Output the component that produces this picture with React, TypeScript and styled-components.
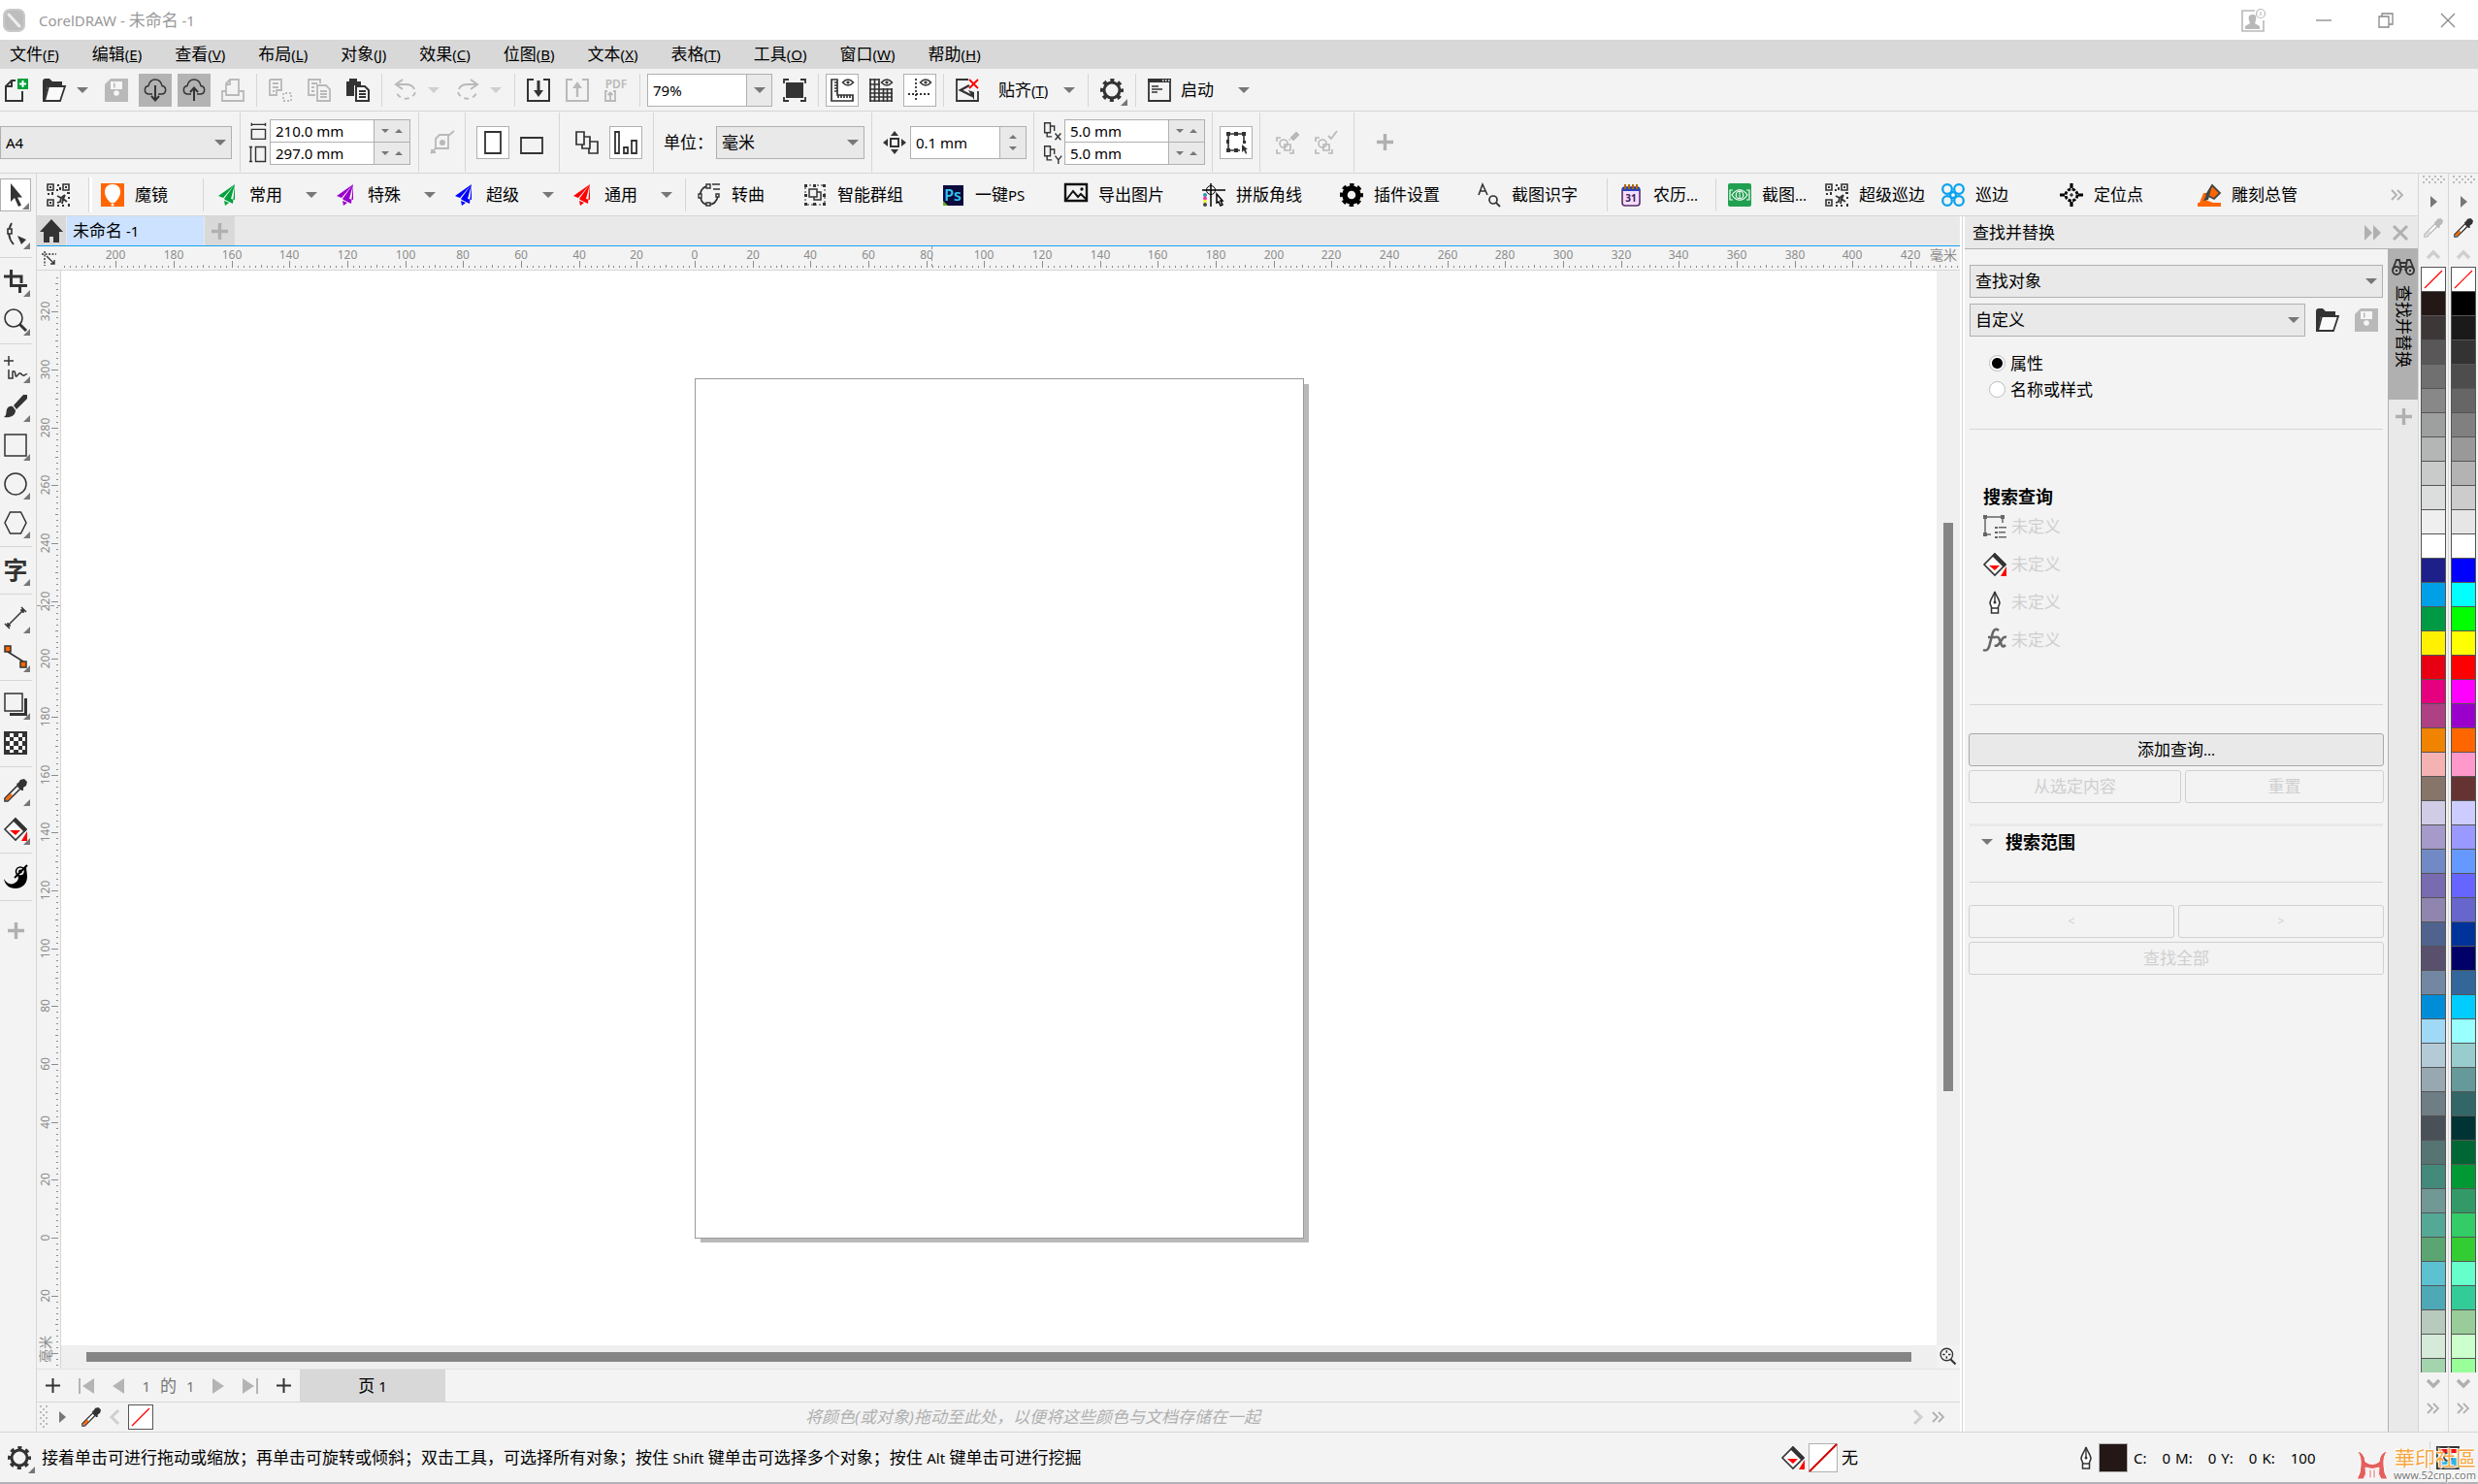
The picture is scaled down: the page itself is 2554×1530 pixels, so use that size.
import React from "react";
import styled, { createGlobalStyle, css } from "styled-components";

const INK = "#333333";
const MUTE = "#b9b9b9";
const LINE = "#d6d6d6";
const EDGE = "#b0b0b0";
const PANEL = "#f3f3f3";
const FIELD = "#e9e9e9";
const ORANGE = "#ff6600";
const RED = "#ff0000";

const GlobalStyle = createGlobalStyle`
  *, *::before, *::after { box-sizing: border-box; }
  body { margin: 0; background: ${PANEL}; overflow: hidden; }
  body, button, input, select {
    font-family: "Noto Sans", "Noto Sans CJK SC", sans-serif;
    font-size: 17px;
    line-height: 24px;
    color: #000;
  }
  button { margin: 0; padding: 0; border: 0; background: none; white-space: nowrap; }
  svg { display: block; flex: none; overflow: visible; }
`;

/* ---------- shared parts ---------- */

const Shell = styled.div`
  display: flex;
  flex-direction: column;
  height: 100vh;
`;

const Latin = styled.span`
  font-size: 15px;
`;

const TitleBar = styled.header`
  display: flex;
  align-items: center;
  flex: none;
  height: 41px;
  padding: 0 19px 0 3px;
  gap: 13px;
  background: #fff;
  color: #999;
`;

const WindowControls = styled.div`
  display: flex;
  align-items: center;
  margin-left: auto;
  gap: 40px;
`;

const AccountButton = styled.button`
  padding-right: 9px;
`;

const MenuBar = styled.nav`
  display: flex;
  align-items: center;
  flex: none;
  height: 30px;
  padding-left: 10px;
  gap: 34px;
  background: #d8d8d8;
`;

const Bar = styled.div<{ $h: number }>`
  display: flex;
  align-items: center;
  flex: none;
  height: ${(p) => p.$h}px;
  border-bottom: 1px solid ${LINE};
  background: ${PANEL};
`;

const CommandBar = styled(Bar)`
  gap: 6px;
  padding-left: 1px;
`;

const Divider = styled.span<{ $h?: number }>`
  flex: none;
  width: 1px;
  height: ${(p) => p.$h ?? 34}px;
  margin: 0 1px;
  background: ${LINE};
`;

const ToolButton = styled.button<{ $w?: number; $tone?: "on" | "dark" }>`
  position: relative;
  display: flex;
  flex: none;
  align-items: center;
  justify-content: center;
  width: ${(p) => p.$w ?? 34}px;
  height: 34px;
  ${(p) => p.$tone === "on" && css`background: #fff; border: 1px solid ${EDGE};`}
  ${(p) => p.$tone === "dark" && css`background: #b3b3b3;`}
`;

const FlyoutCorner = styled.span`
  position: absolute;
  right: 1px;
  bottom: 1px;
  border-left: 7px solid transparent;
  border-bottom: 7px solid #777;
`;

const Split = styled.div`
  display: flex;
  align-items: center;
`;

const CaretButton = styled.button`
  display: flex;
  align-items: center;
  justify-content: center;
  width: 24px;
  height: 34px;
`;

const SnapButton = styled.button`
  display: flex;
  align-items: center;
  height: 34px;
  width: 94px;
  padding: 0 6px 0 9px;
  justify-content: space-between;
`;

const LaunchButton = styled(SnapButton)`
  width: 116px;
  padding: 0 6px 0 5px;
  justify-content: flex-start;
  gap: 10px;
  > :last-child { margin-left: auto; }
`;

const ComboBox = styled.div<{ $w: number }>`
  display: flex;
  flex: none;
  width: ${(p) => p.$w}px;
  height: 34px;
  border: 1px solid ${EDGE};
  background: #fff;
`;

const TextInput = styled.input`
  flex: 1;
  min-width: 0;
  border: 0;
  outline: 0;
  padding: 0 5px;
  background: #fff;
  font-size: 15px;
`;

const ComboCaret = styled.button`
  display: flex;
  align-items: center;
  justify-content: center;
  width: 26px;
  border-left: 1px solid ${EDGE};
  background: ${FIELD};
`;

const SelectBox = styled.div<{ $w?: number }>`
  display: grid;
  align-items: center;
  height: 34px;
  flex: ${(p) => (p.$w ? "none" : "1")};
  width: ${(p) => (p.$w ? p.$w + "px" : "auto")};
  > * { grid-area: 1 / 1; }
  > svg { justify-self: end; margin-right: 6px; pointer-events: none; }
`;

const NativeSelect = styled.select<{ $latin?: boolean }>`
  appearance: none;
  width: 100%;
  height: 34px;
  border: 1px solid ${EDGE};
  border-radius: 0;
  padding: 0 5px;
  background: ${FIELD};
  ${(p) => p.$latin && css`font-size: 15px;`}
`;

const PropertyGroup = styled.div<{ $w: number; $pad?: number; $gap?: number }>`
  display: flex;
  flex: none;
  align-items: center;
  width: ${(p) => p.$w}px;
  height: 61px;
  padding-left: ${(p) => p.$pad ?? 7}px;
  gap: ${(p) => p.$gap ?? 6}px;
  border-right: 1px solid ${LINE};
`;

const SizeGrid = styled.div`
  display: grid;
  grid-template-columns: 18px 145px;
  grid-template-rows: 24px 23px;
  column-gap: 4px;
  align-items: center;
`;

const SpinRow = styled.div`
  display: flex;
  height: 100%;
  border: 1px solid ${EDGE};
  background: #fff;
  &:last-child { border-top: 0; }
`;

const SpinPair = styled.div`
  display: flex;
  align-items: center;
  justify-content: space-evenly;
  width: 37px;
  border-left: 1px solid ${EDGE};
  background: ${FIELD};
`;

const SpinStack = styled(SpinPair)`
  flex-direction: column;
  width: 27px;
`;

const SpinButton = styled.button`
  display: flex;
`;

const AddButton = styled.button<{ $w: number; $h: number }>`
  display: flex;
  align-items: center;
  justify-content: center;
  width: ${(p) => p.$w}px;
  height: ${(p) => p.$h}px;
`;

/* ---------- main area ---------- */

const Main = styled.main`
  display: flex;
  flex: 1;
  min-height: 0;
  border-bottom: 1px solid ${LINE};
`;

const Toolbox = styled.aside`
  display: flex;
  flex-direction: column;
  flex: none;
  width: 38px;
  padding-top: 5px;
  gap: 6px;
  border-right: 1px solid ${LINE};
`;

const ToolRule = styled.span`
  flex: none;
  width: 33px;
  height: 1px;
  margin: 1px 0;
  background: ${LINE};
`;

const Center = styled.div`
  display: flex;
  flex-direction: column;
  flex: 1;
  min-width: 0;
`;

const PluginBar = styled(Bar)`
  padding: 0 14px 0 5px;
`;

const PluginButton = styled.button<{ $w: number }>`
  display: flex;
  flex: none;
  align-items: center;
  width: ${(p) => p.$w}px;
  height: 34px;
  padding-left: 5px;
  gap: 11px;
`;

const PluginCaret = styled.span`
  margin-left: 13px;
`;

const PluginDivider = styled(Divider)`
  margin: 0 7px 0 6px;
`;

const PluginGrip = styled.span`
  width: 4px;
  height: 36px;
  margin: 0 4px 0 7px;
  background: #fff;
  border-left: 1px solid ${LINE};
`;

const Overflow = styled.button`
  margin-left: auto;
`;

const Work = styled.div`
  display: flex;
  flex: 1;
  min-height: 0;
`;

const DocumentArea = styled.section`
  display: flex;
  flex-direction: column;
  flex: 1;
  min-width: 0;
`;

const DocTabs = styled.div`
  display: flex;
  flex: none;
  height: 31px;
  gap: 1px;
  border-bottom: 1px solid #16a4ee;
  background: ${FIELD};
`;

const TabCell = styled.button<{ $w: number; $active?: boolean }>`
  display: flex;
  align-items: center;
  justify-content: ${(p) => (p.$active ? "flex-start" : "center")};
  width: ${(p) => p.$w}px;
  padding-left: ${(p) => (p.$active ? 6 : 0)}px;
  background: ${(p) => (p.$active ? "#cde2ff" : "#d9d9d9")};
`;

const HRulerRow = styled.div`
  display: flex;
  flex: none;
  height: 25px;
  border-bottom: 1px solid ${LINE};
`;

const RulerCorner = styled.div`
  flex: none;
  width: 25px;
`;

const RulerSvg = styled.svg`
  flex: 1;
  min-width: 0;
  min-height: 0;
  width: 100%;
  height: 100%;
  font-size: 12px;
`;

const CanvasRow = styled.div`
  display: flex;
  flex: 1;
  min-height: 0;
`;

const VRuler = styled.div`
  display: flex;
  flex: none;
  width: 25px;
  border-right: 1px solid ${LINE};
`;

const CanvasColumn = styled.div`
  display: grid;
  flex: 1;
  min-width: 0;
  grid-template-columns: 1fr 24px;
  grid-template-rows: 1fr 24px;
`;

const Canvas = styled.div`
  position: relative;
  overflow: hidden;
  background: #fff;
`;

const Page = styled.div`
  position: absolute;
  left: 653px;
  top: 111px;
  width: 628px;
  height: 887px;
  border: 1px solid #999;
  background: #fff;
  box-shadow: 5px 4px 0 #b9b9b9;
  clip-path: polygon(0 0, 100% 0, 100% 6px, 640px 6px, 640px 900px, 6px 900px, 6px 100%, 0 100%);
`;

const VScroll = styled.div`
  display: flex;
  flex-direction: column;
  align-items: center;
  background: #efefef;
`;

const HScroll = styled.div`
  display: flex;
  align-items: center;
  padding: 0 26px;
  background: #efefef;
`;

const Grow = styled.span<{ $n: number }>`
  flex: ${(p) => p.$n};
`;

const VThumb = styled.span`
  flex: 586;
  width: 10px;
  background: #858585;
`;

const HThumb = styled.span`
  flex: 1;
  height: 10px;
  background: #858585;
`;

const ZoomCorner = styled.button`
  display: flex;
  align-items: center;
  justify-content: center;
`;

const PageBar = styled.div`
  display: flex;
  flex: none;
  align-items: center;
  height: 35px;
  border-top: 1px solid #e2e2e2;
  border-bottom: 1px solid ${LINE};
`;

const PageNav = styled.div`
  display: flex;
  align-items: center;
  justify-content: space-between;
  width: 271px;
  padding: 0 9px;
  color: #777;
`;

const PageCount = styled.span`
  width: 54px;
  display: flex;
  justify-content: space-between;
`;

const PageTab = styled.button`
  width: 150px;
  height: 33px;
  background: #d8d8d8;
`;

const ColorBar = styled.div`
  display: flex;
  flex: none;
  align-items: center;
  height: 30px;
  padding: 0 15px 0 3px;
  gap: 8px;
`;

const NoneSwatch = styled.button`
  display: flex;
  align-items: center;
  justify-content: center;
  width: 26px;
  height: 26px;
  border: 1px solid #555;
  background: #fff;
`;

const Hint = styled.em`
  flex: 1;
  text-align: center;
  color: #b0b0b0;
`;

const Splitter = styled.div`
  flex: none;
  width: 5px;
  border: solid #fff;
  border-width: 0 2px;
  background: ${LINE};
`;

/* ---------- docker ---------- */

const Docker = styled.section`
  display: flex;
  flex-direction: column;
  flex: none;
  width: 467px;
`;

const DockerHeader = styled.div`
  display: flex;
  align-items: center;
  height: 34px;
  padding: 0 10px 0 8px;
  gap: 12px;
  border-bottom: 1px solid ${EDGE};
  background: ${FIELD};
  > :first-child { flex: 1; }
`;

const DockerMain = styled.div`
  display: flex;
  flex: 1;
  min-height: 0;
`;

const DockerBody = styled.div`
  flex: 1;
  padding: 16px 4px 0;
`;

const DockerTabs = styled.div`
  display: flex;
  flex-direction: column;
  flex: none;
  width: 31px;
  border-left: 1px solid ${EDGE};
  background: ${FIELD};
`;

const DockerTab = styled.button`
  display: flex;
  flex-direction: column;
  align-items: center;
  height: 155px;
  padding-top: 6px;
  gap: 7px;
  background: #b0b0b0;
`;

const TabLabel = styled.span`
  writing-mode: vertical-rl;
  text-orientation: sideways;
`;

const FormRow = styled.div`
  display: flex;
  align-items: center;
  height: 34px;
  padding: 0 1px;
  margin-bottom: 6px;
`;

const FormIcons = styled.div`
  display: flex;
  gap: 16px;
  padding: 0 5px 0 11px;
`;

const Radios = styled.div`
  padding: 8px 0 0 21px;
`;

const RadioLabel = styled.label`
  display: flex;
  align-items: center;
  height: 27px;
  gap: 5px;
`;

const Radio = styled.input`
  appearance: none;
  width: 17px;
  height: 17px;
  margin: 0;
  border: 1px solid #bbb;
  border-radius: 50%;
  background: #fff;
  &:checked { background: radial-gradient(circle, #000 0 5px, #fff 6px); }
`;

const Rule = styled.hr<{ $top: number; $thick?: boolean }>`
  height: ${(p) => (p.$thick ? 3 : 1)}px;
  margin: ${(p) => p.$top}px 1px 0;
  border: 0;
  background: ${(p) => (p.$thick ? "#e9e9e9" : LINE)};
`;

const Heading = styled.h2`
  display: flex;
  align-items: center;
  gap: 13px;
  margin: 0;
  font-size: 18px;
  line-height: 22px;
  font-weight: 700;
`;

const QueryList = styled.ul`
  margin: 0;
  padding: 0;
  list-style: none;
`;

const QueryItem = styled.li`
  display: flex;
  align-items: center;
  height: 39px;
  gap: 5px;
  color: #cfcfcf;
`;

const QuerySection = styled.div`
  padding: 58px 0 0 15px;
`;

const ScopeHeading = styled.div`
  padding: 5px 0 0 13px;
`;

const ButtonGrid = styled.div<{ $top: number; $cols: string }>`
  display: grid;
  grid-template-columns: ${(p) => p.$cols};
  gap: 4px;
  padding-top: ${(p) => p.$top}px;
`;

const PushButton = styled.button<{ $wide?: boolean; $small?: boolean }>`
  height: 34px;
  border: 1px solid #a8a8a8;
  border-radius: 3px;
  background: ${FIELD};
  ${(p) => p.$wide && css`grid-column: 1 / -1;`}
  ${(p) => p.$small && css`font-size: 12px;`}
  &:disabled { border-color: #d0d0d0; background: ${PANEL}; color: #cfcfcf; }
`;

/* ---------- palettes ---------- */

const Palette = styled.aside`
  display: flex;
  flex-direction: column;
  align-items: center;
  flex: none;
  width: 31px;
  padding: 2px 2px 0;
  border-left: 1px solid ${LINE};
`;

const PaletteTop = styled.div`
  display: flex;
  flex-direction: column;
  flex: none;
  align-items: center;
  justify-content: space-between;
  height: 94px;
  padding-bottom: 8px;
`;

const PaletteBottom = styled.div`
  display: flex;
  flex-direction: column;
  flex: none;
  align-items: center;
  height: 61px;
  padding-top: 7px;
  gap: 14px;
`;

const Swatches = styled.div`
  display: flex;
  flex-direction: column;
  flex: 1;
  min-height: 0;
  width: 26px;
  overflow: hidden;
`;

const Swatch = styled.button<{ $c: string }>`
  flex: none;
  display: flex;
  align-items: center;
  justify-content: center;
  height: 25px;
  border: 1px solid #555;
  border-bottom: 0;
  background: ${(p) => p.$c};
`;

/* ---------- status ---------- */

const StatusBar = styled.footer`
  position: relative;
  display: flex;
  flex: none;
  align-items: center;
  height: 53px;
  padding: 0 14px 0 3px;
  border-bottom: 2px solid #b1b1b7;
`;

const StatusText = styled.span`
  flex: 1;
  padding-left: 6px;
  white-space: nowrap;
`;

const FillInfo = styled.div`
  display: flex;
  align-items: center;
  width: 302px;
  gap: 4px;
`;

const OutlineInfo = styled.div`
  display: flex;
  align-items: center;
  width: 365px;
  gap: 1px;
`;

const ColorChip = styled.span<{ $c: string }>`
  display: flex;
  width: 30px;
  height: 30px;
  border: 1px solid ${EDGE};
  background: ${(p) => p.$c};
`;

const InkList = styled.span`
  display: flex;
  gap: 5px;
  padding-left: 5px;
  font-size: 15px;
`;

const InkPair = styled.span`
  display: flex;
  gap: 16px;
`;

const Watermark = styled.div`
  position: absolute;
  right: 2px;
  bottom: 0;
  display: flex;
  align-items: center;
  gap: 4px;
`;

const WatermarkText = styled.div`
  display: flex;
  flex-direction: column;
  align-items: flex-end;
  color: #f7a640;
  font-size: 21px;
  line-height: 22px;
  text-shadow: 0 0 2px #fff, 1px 1px 1px #fff, -1px -1px 1px #fff;
`;

const WatermarkUrl = styled.span`
  color: #777;
  font-size: 11px;
  line-height: 14px;
`;

/* ---------- icons ---------- */

const eye = (c: string) => (
  <>
    <path d="M12.500 4Q18-2 23.500 4Q18 10 12.500 4z" fill="none" stroke={c} strokeWidth="1.500" />
    <circle cx="18" cy="4" r="1.600" fill={c} />
  </>
);

const glyphs: Record<string, (c: string) => React.ReactNode> = {
  newDoc: (c) => (<><path d="M11 2H7L1 8V23H18V13M7 2V8H1" fill="none" stroke={c} strokeWidth="2" /><path d="M13 0h11v11H13z" fill="#00a03c" /><path d="M18.500 2v7M15 5.500h7" stroke="#fff" strokeWidth="2" /></>),
  folder: (c) => (<><path d="M0 3Q0 0 3 0H7L10 3H20V8H5L2 22V24H0z" fill={c} /><path d="M6 8H23L18 23H2z" fill="#fafafa" stroke={c} strokeWidth="1.800" /></>),
  save: (c) => (<><path d="M6 0H24V24H0V6z" fill={c} /><path d="M6 3h12v8H6z" fill="#f6f6f6" /><path d="M9 4.500h1.500v5H9z" fill={c} /><circle cx="12" cy="15" r="2.800" fill="#f6f6f6" /></>),
  cloudDown: (c) => (<><path d="M9 16H5A4.300 4.300 0 0 1 5 7.500C6 3 9 1 12 1s6 2 7 6.500A4.300 4.300 0 0 1 19 16H15" fill="none" stroke={c} strokeWidth="1.500" /><path d="M12 7V22M8 18l4 4.500 4-4.500" fill="none" stroke={c} strokeWidth="2" /></>),
  cloudUp: (c) => (<><path d="M9 16H5A4.300 4.300 0 0 1 5 7.500C6 3 9 1 12 1s6 2 7 6.500A4.300 4.300 0 0 1 19 16H15" fill="none" stroke={c} strokeWidth="1.500" /><path d="M12 23V9M8 14l4-4.500 4 4.500" fill="none" stroke={c} strokeWidth="2" /></>),
  print: (c) => (<path d="M5 14V5l4-4h9v13M9 1v5H5M1 13h4v4h13v-4h5v10H1z" fill="none" stroke={c} strokeWidth="1.800" />),
  cut: (c) => (<><path d="M1 1h12v8M1 1v16h7v-5h5V8M4 5h6M4 9h6M4 13h2" fill="none" stroke={c} strokeWidth="1.800" /><path d="M15 15v8h8v-8z" fill="none" stroke={c} strokeWidth="1.800" strokeDasharray="2 2" /></>),
  copy: (c) => (<><path d="M8 17H1V1h12v4M4 5h6M4 9h3M4 13h3" fill="none" stroke={c} strokeWidth="1.800" /><path d="M10 7h9l4 4v12H10zM13 13h7M13 16h7M13 19h7" fill="none" stroke={c} strokeWidth="1.800" /></>),
  paste: (c) => (<><path d="M0 3h3V0h8v3h4v4H8v11H0z" fill={c} /><path d="M10 8h9l4 4v11H10zM13 13h7M13 16h7M13 19h7" fill="#f6f6f6" stroke={c} strokeWidth="2" /></>),
  undo: (c) => (<><path d="M9 1L2 6l7 5M3 6h9c5 0 8 2 9 5" fill="none" stroke={c} strokeWidth="2" /><path d="M22 14a10 9 0 0 1-19 1" fill="none" stroke={c} strokeWidth="1.800" strokeDasharray="5 4" /></>),
  redo: (c) => (<><path d="M15 1l7 5-7 5M21 6h-9c-5 0-8 2-9 5" fill="none" stroke={c} strokeWidth="2" /><path d="M2 14a10 9 0 0 0 19 1" fill="none" stroke={c} strokeWidth="1.800" strokeDasharray="5 4" /></>),
  importIn: (c) => (<><path d="M7 1H1V23H23V1H17" fill="none" stroke={c} strokeWidth="2" /><path d="M12 2v11" stroke={c} strokeWidth="3" /><path d="M7 12h10l-5 7z" fill={c} /></>),
  exportOut: (c) => (<><path d="M7 1H1V23H23V1H17" fill="none" stroke={c} strokeWidth="2" /><path d="M12 9v10" stroke={c} strokeWidth="2.400" /><path d="M7 10h10l-5-7z" fill={c} /></>),
  pdf: (c) => (<><text x="12" y="10" textAnchor="middle" fontSize="12" fontWeight="600" fill={c}>PDF</text><path d="M3 13H1v10h10V13H9M6 22v-8M3.500 17L6 14.500 8.500 17" fill="none" stroke={c} strokeWidth="1.800" /></>),
  fullscreen: (c) => (<><path d="M3 4h18v16H3z" fill={c} /><path d="M1 5V1h5M18 1h5v4M23 19v4h-5M6 23H1v-4" fill="none" stroke={c} strokeWidth="1.800" /></>),
  rulers: (c) => (<><path d="M1 1h6v16h16v6H1zM4 4h3M4 7h3M4 10h3M4 13h3M8 17v3M11 17v3M14 17v3M17 17v3M20 17v3" fill="none" stroke={c} strokeWidth="1.700" />{eye(c)}</>),
  gridEye: (c) => (<><path d="M0 1h10M0 6h11M0 11h24M0 15h24M0 19h24M0 23h24M1 0v24M5.500 0v24M10 0v24M14.500 10v14M18.500 10v14M23 10v14" fill="none" stroke={c} strokeWidth="1.700" />{eye(c)}</>),
  guides: (c) => (<><path d="M8 0v24M0 16h24" stroke={c} strokeWidth="1.800" strokeDasharray="2 2" />{eye(c)}</>),
  snapOff: (c) => (<><path d="M13 1H1V23H23V13" fill="none" stroke={c} strokeWidth="1.800" /><path d="M14 7L5 12l12 6" fill="none" stroke={c} strokeWidth="2.400" /><path d="M13 12l6 2v8z" fill={c} /><path d="M14 1l9 9M23 1l-9 9" stroke={RED} strokeWidth="1.800" /></>),
  gear: (c) => (<><circle cx="12" cy="12" r="8" fill="none" stroke={c} strokeWidth="3" /><circle cx="12" cy="12" r="10.300" fill="none" stroke={c} strokeWidth="3.400" strokeDasharray="4.090 4" strokeDashoffset="2" /></>),
  gearBold: (c) => (<><circle cx="12" cy="12" r="7" fill="none" stroke={c} strokeWidth="5.500" /><circle cx="12" cy="12" r="10.300" fill="none" stroke={c} strokeWidth="3.400" strokeDasharray="4.400 3.690" strokeDashoffset="2.200" /></>),
  launch: (c) => (<><path d="M1 1h22v22H1z" fill="none" stroke={c} strokeWidth="1.800" /><path d="M0 0h24v4H0z" fill={c} /><path d="M15 2h1.500M18 2h1.500M21 2h1.500" stroke="#fff" strokeWidth="1.500" /><path d="M4 8h7M4 11h11M4 14h6" stroke={c} strokeWidth="1.500" /></>),
  pageWidth: (c) => (<path d="M4 4h17M4 2v4M21 2v4M4 10h17v12H4z" fill="none" stroke={c} strokeWidth="1.700" />),
  pageHeight: (c) => (<path d="M3 3v18M1 3h4M1 21h4M9 3h12v18H9z" fill="none" stroke={c} strokeWidth="1.700" />),
  autofit: (c) => (<><path d="M5 8l4-4h9v14H5z" fill="none" stroke={c} strokeWidth="1.800" /><circle cx="12" cy="12" r="3" fill={c} /><path d="M18 5l6-5M0 23l5-5M1 19v3h4" fill="none" stroke={c} strokeWidth="1.800" /></>),
  portrait: (c) => <path d="M4 1h16v22H4z" fill="none" stroke={c} strokeWidth="1.800" />,
  landscape: (c) => <path d="M1 7h22v16H1z" fill="none" stroke={c} strokeWidth="1.800" />,
  pagesAll: (c) => (<path d="M1 1h8v13H1zM9 6h6v12H7v-4M15 11h8v12h-9v-5" fill="none" stroke={c} strokeWidth="1.700" />),
  pageOne: (c) => (<path d="M1 1h4v22H1zM10 17h4v6h-4zM18 10h5v13h-5z" fill="none" stroke={c} strokeWidth="1.800" />),
  nudge: (c) => (<><path d="M8 8h8v8H8z" fill="none" stroke={c} strokeWidth="2" /><path d="M12 0l4 5H8zM12 24l4-5H8zM0 12l5-4v8zM24 12l-5-4v8z" fill={c} /></>),
  dupX: (c) => (<><path d="M2 2h7v12H2zM9 6h5v6M5 14v5h6" fill="none" stroke={c} strokeWidth="1.700" /><path d="M15 15l7 8M22 15l-7 8" stroke={c} strokeWidth="1.700" /></>),
  dupY: (c) => (<><path d="M2 2h7v12H2zM9 6h5v6M5 14v5h6" fill="none" stroke={c} strokeWidth="1.700" /><path d="M15 14l4 5 4-5M19 19v5" fill="none" stroke={c} strokeWidth="1.700" /></>),
  treatAll: (c) => (<><path d="M20 10V3H4v17h12" fill="none" stroke={c} strokeWidth="1.600" /><path d="M2 1h4v4H2zM10 1h4v4h-4zM18 1h4v4h-4zM2 9h3v4H2zM2 18h4v4H2zM10 18h4v4h-4zM19 10h3v3h-3zM18 14v8l2-2 2 4 1-1-1-4h2z" fill={c} /></>),
  editShape: (c) => (<><path d="M1 11V7h4M14 23h4v-4M1 19v4h4" fill="none" stroke={c} strokeWidth="1.700" /><circle cx="8" cy="13" r="4" fill="none" stroke={c} strokeWidth="1.600" /><path d="M9 14h6v6H9z" fill="none" stroke={c} strokeWidth="1.700" /><path d="M15 7l6-6 3 3-6 6zM13 9l2 0" fill={c} stroke={c} /></>),
  doneShape: (c) => (<><path d="M1 11V7h4M14 23h4v-4M1 19v4h4" fill="none" stroke={c} strokeWidth="1.700" /><circle cx="8" cy="13" r="4" fill="none" stroke={c} strokeWidth="1.600" /><path d="M9 14h6v6H9z" fill="none" stroke={c} strokeWidth="1.700" /><path d="M14 5l3 3 6-8" fill="none" stroke={c} strokeWidth="1.800" /></>),
  macro: (c) => (<><path d="M1 1h6v6H1zM17 1h6v6h-6zM1 17h6v6H1z" fill="none" stroke={c} strokeWidth="1.600" /><path d="M3 3h2v2H3zM19 3h2v2h-2zM3 19h2v2H3zM11 1h2v2h-2zM13 4h2v3h-2zM10 6h2v2h-2zM1 10h2v2H1zM5 9h2v3H5zM22 14h2v2h-2zM22 21h2v3h-2zM11 22h2v2h-2zM16 22h2v2h-2zM21 9h3v2h-3z" fill={c} /><path d="M11 13l4 2 4-3M19 12l-2 4 4 3M15 15l-1 4-3 1M17 16l-1 5" fill="none" stroke={c} strokeWidth="1.800" /></>),
  mirror: () => (<><path d="M0 0h24v24H0z" fill={ORANGE} /><path d="M12 1c5 0 8 3 8 8 0 5-4 9-6 11h-4C8 18 4 14 4 9c0-5 3-8 8-8z" fill="#fff" /><circle cx="12" cy="22" r="1.500" fill="#fff" /></>),
  plane: (c) => (<path d="M20 1L3 13l5 2zM20 1L9 16l1 1 8 4zM20 1v16l-4-1zM9 18l5 2-4 3z" fill={c} />),
  convert: (c) => (<><path d="M13 3C6 2 2 8 3 13M3 15c1 4 4 7 8 7 6 0 9-4 10-9M15 1h8M16 6h7" fill="none" stroke={c} strokeWidth="1.700" /><path d="M9 1h4v4H9zM1 11h3v4H1zM9 20h4v3H9zM19 11h3v3h-3z" fill="#f3f3f3" stroke={c} strokeWidth="1.400" /></>),
  smartGroup: (c) => (<><path d="M2 2h20v20H2z" fill="none" stroke={c} strokeWidth="1" strokeDasharray="2 2" /><path d="M1 1h3v3H1zM10 1h3v3h-3zM20 1h3v3h-3zM1 11h3v3H1zM20 11h3v3h-3zM1 20h3v3H1zM10 20h3v3h-3zM20 20h3v3h-3z" fill={c} /><path d="M6 6h8v8H6zM14 9h4v8h-7v-3" fill="none" stroke={c} strokeWidth="1.500" /></>),
  ps: () => (<><path d="M2 2h21v21H2z" fill="#0b0a3d" /><path d="M2 18l5 5H2z" fill="#6a2" /><text x="12" y="18" textAnchor="middle" fontSize="16" fontWeight="600" fill="#31c5f0">Ps</text></>),
  picture: (c) => (<><path d="M1 1h22v17H1z" fill="none" stroke={c} strokeWidth="2.400" /><path d="M2 17l7-9 5 6 3-3 6 6" fill="none" stroke={c} strokeWidth="2" /><circle cx="18" cy="6" r="1.700" fill={c} /></>),
  cropMarks: (c) => (<><path d="M0 7h24M9 0v24" stroke={c} strokeWidth="1.500" /><circle cx="9" cy="7" r="4.500" fill="none" stroke={c} /><circle cx="3" cy="12" r="2" fill="#29b" /><circle cx="3" cy="15.500" r="2" fill="#e3a" /><circle cx="3" cy="18.500" r="1.800" fill="#ee2" /><circle cx="3" cy="22" r="2" fill="#444" /><path d="M15 11v9l2-1 2 4 2-1-2-4h2z" fill="#fff" stroke={c} strokeWidth="1.500" /></>),
  ocr: (c) => (<><path d="M1 12L5 1l5 11M2.500 8h6" fill="none" stroke={c} strokeWidth="1.600" /><circle cx="16" cy="17" r="4" fill="none" stroke={c} strokeWidth="1.700" /><path d="M19 20l4 4" stroke={c} strokeWidth="1.800" /></>),
  calendar: () => (<><rect x="3" y="4" width="18" height="19" rx="3" fill="#f4dcff" stroke="#5b2d6b" strokeWidth="1.600" /><path d="M3 4h18v4H3z" fill="#2846b8" /><path d="M6 1v5M10 1v5M14 1v5M18 1v5" stroke="#a8660c" strokeWidth="2" /><text x="12" y="19" textAnchor="middle" fontSize="10" fontWeight="700" fill="#3b1c50">31</text></>),
  capture: () => (<><rect width="24" height="24" rx="2" fill="#20a050" /><path d="M5 7H2v10h3M19 7h3v10h-3M4 12c5-7 11-7 16 0-5 7-11 7-16 0z" fill="none" stroke="#fff" strokeWidth="1.200" /><circle cx="12" cy="12" r="3.800" fill="none" stroke="#fff" strokeWidth="1.200" /><path d="M12 9v6" stroke="#fff" /></>),
  atom: () => (<g fill="none" stroke="#0ba2ee" strokeWidth="2.300"><circle cx="6" cy="6" r="4.800" /><circle cx="18" cy="6" r="4.800" /><circle cx="6" cy="18" r="4.800" /><circle cx="18" cy="18" r="4.800" /><path d="M9 9l6 6M15 9l-6 6" /><circle cx="12" cy="12" r="3" fill="#fff" /></g>),
  anchor: (c) => (<><path d="M12 0v5M12 19v5M0 12h5M19 12h5" stroke={c} strokeWidth="3.200" /><circle cx="12" cy="12" r="6" fill="none" stroke={c} strokeWidth="2.800" strokeDasharray="3.300 1.400" /><path d="M12 10v4M10 12h4" stroke={c} strokeWidth="1" /></>),
  engrave: () => (<><path d="M0 20h24v4H0zM2 20l4-10h3l-1 7 8 3z" fill={ORANGE} /><path d="M15 2l8 8-6 6-8-4z" fill={ORANGE} stroke="#444" strokeWidth="1.800" /><path d="M15 2L8 14l-2 4 5-1z" fill="#444" /></>),
  pick: (c) => (<path d="M7 0v19l4-4 4 9 3-1.500-4-8h5z" fill={c} />),
  shape: (c) => (<><path d="M8 1C4 8 4 16 10 23" fill="none" stroke={c} strokeWidth="1.800" /><path d="M4 7h4v5H4z" fill="#f3f3f3" stroke={c} strokeWidth="1.600" /><path d="M14 14l9 4-5 5z" fill={c} /></>),
  crop: (c) => (<path d="M0 7h18v7M7.500 0v16.500H24M16.500 16v8" fill="none" stroke={c} strokeWidth="3" />),
  zoom: (c) => (<><circle cx="10" cy="10" r="9" fill="none" stroke={c} strokeWidth="1.600" /><path d="M16 16l7 7" stroke={c} strokeWidth="3" /></>),
  freehand: (c) => (<path d="M5 0v10M0 5h10M5 14v9h4v-7c4-2 2 6 4 5s2-4 4-3 2 3 4 2 2-2 3-1" fill="none" stroke={c} strokeWidth="1.500" />),
  brush: (c) => (<path d="M20 0h4v4L13 15l-3-4zM9 12l3 4c0 6-6 8-12 7 3-2 2-4 3-8 1-3 4-4 6-3z" fill={c} />),
  rect: (c) => <path d="M1 1h22v22H1z" fill="none" stroke={c} strokeWidth="1.500" />,
  ellipse: (c) => <circle cx="12" cy="12" r="11" fill="none" stroke={c} strokeWidth="1.500" />,
  polygon: (c) => <path d="M6.500 1h11L23 12l-5.500 11h-11L1 12z" fill="none" stroke={c} strokeWidth="1.500" />,
  textTool: (c) => <text x="12" y="21" textAnchor="middle" fontSize="25" fontWeight="700" fill={c}>字</text>,
  dimension: (c) => (<path d="M4 20L20 4M1 18l5 5M18 1l5 5M4 17v3h3M17 4h3v3" fill="none" stroke={c} strokeWidth="1.500" />),
  connector: (c) => (<><path d="M4 7l16 10" stroke={c} strokeWidth="1.500" /><path d="M1 1h6v6H1zM17 17h6v6h-6z" fill={ORANGE} stroke={c} strokeWidth="1.500" /></>),
  shadow: (c) => (<><path d="M1 1h18v18H1z" fill="none" stroke={c} strokeWidth="1.500" /><path d="M21 6h3v18H6v-3h15z" fill={c} /></>),
  transparency: (c) => (<><path d="M0 0h24v24H0z" fill={c} /><path d="M6 2h4v4H6zM15 2h4v4h-4zM2 6h4v4H2zM10 6h5v4h-5zM19 6h3v4h-3zM6 10h4v5H6zM15 10h4v5h-4zM2 15h4v4H2zM10 15h5v4h-5zM19 15h3v4h-3zM6 19h4v3H6zM15 19h4v3h-4z" fill="#fff" /></>),
  dropper: (c) => (<><path d="M14 7l3 3L4 23H1v-3z" fill="#fff" stroke={c} strokeWidth="1.600" /><path d="M2 20l5-5 2 2-5 5H2z" fill={c === MUTE ? "#ddd" : ORANGE} /><path d="M13 5l2-1 2-3 4-1 3 3-1 4-3 2v3h-2z" fill={c} /></>),
  fill: (c) => (<><path d="M12 1L23 12 12 23 1 12z" fill="#fff" stroke={c} strokeWidth="1.600" /><path d="M12 0L24 12l-3 3L9 3z" fill={c} /><path d="M6 13h11l-5 5zM24 14v10h-6z" fill={RED} /></>),
  contour: (c) => (<><path d="M0 14c3 6 9 7 13 3 3-3 2-6 0-7l8-8 3-2c-2 2 0 6 0 12 0 8-6 12-12 12C5 24 1 20 0 14z" fill={c} /><circle cx="17" cy="6.500" r="4.500" fill="#f3f3f3" stroke={c} strokeWidth="1.600" /><circle cx="17" cy="6.500" r="2" fill={c} /><path d="M11 13L24 0" stroke={c} strokeWidth="2" /></>),
  pen: (c) => (<><path d="M12 1c-1 4-5 8-5 12l2 5h6l2-5c0-4-4-8-5-12zM8.500 18h7v5h-7z" fill="#fff" stroke={c} strokeWidth="1.500" /><path d="M12 2v10" stroke={c} strokeWidth="1.400" /><circle cx="12" cy="12" r="1.500" fill={c} /></>),
  props: (c) => (<><path d="M2 2h18v6M2 2v18h6" fill="none" stroke={c} strokeWidth="1.500" /><path d="M0 0h4v4H0zM18 0h4v4h-4zM0 18h4v4H0zM12 12h3v2h-3zM12 17h3v2h-3zM12 22h3v2h-3zM16 12h8v1.500h-8zM16 17h7v1.500h-7zM16 22h8v1.500h-8z" fill={c} /></>),
  fx: (c) => (<path d="M16 2Q12-1 10 4L6 19Q4 24 0 22M5 9h8M13 9q3-1 4 3l2 5q1 3 4 0M24 9q-3-1-5 3l-3 4q-2 3-4 1" fill="none" stroke={c} strokeWidth="2.500" />),
  binoculars: (c) => (<g fill="none" stroke={c} strokeWidth="1.800"><circle cx="5" cy="16" r="4" /><circle cx="19" cy="16" r="4" /><path d="M1 15L5 5h3l2 11M23 15L19 5h-3l-2 11M9 8h6M9 12h6" /><path d="M4 16h2M18 16h2" /></g>),
  home: (c) => <path d="M12 0l12 13h-4v11h-6v-6h-4v6H4V13H0z" fill={c} />,
  zoomPage: (c) => (<><circle cx="10" cy="9" r="7.500" fill="none" stroke={c} strokeWidth="1.600" /><path d="M15 15l6 6" stroke={c} strokeWidth="2.600" /><path d="M10 4v3M10 11v3M5 9h3M12 9h3" stroke={c} strokeWidth="1.800" /></>),
  origin: (c) => (<><path d="M0 3h15M3 0v15" stroke={c} strokeWidth="1.400" strokeDasharray="2 1.500" /><path d="M5 5l8 8M9 13h4V9" fill="none" stroke={c} strokeWidth="1.400" /></>),
  user: (c) => (<><path d="M14 2H1v21h22V12" fill="none" stroke={c} strokeWidth="1.600" /><path d="M12 6c3 0 4 2 3 6l-1 3 5 3v3H4v-3l5-3-1-3c-1-4 0-6 4-6z" fill={c} /><circle cx="20" cy="5" r="4.500" fill="#fff" stroke={c} strokeWidth="1.200" /><path d="M20 3v4" stroke={c} strokeWidth="1.200" /></>),
  colorDoc: () => (<><path d="M1 1h22v22H1z" fill="#fff" stroke={INK} strokeWidth="2" /><path d="M3 3h18v4H3z" fill="#e11" /><path d="M3 12h18v9H3z" fill="#28b4e8" /><circle cx="12" cy="11" r="4" fill="#fff" stroke={INK} strokeWidth="2" /></>),
  logo: () => (<><rect width="23" height="24" rx="7" fill="#c9c9c9" /><rect x="2" y="2" width="19" height="20" rx="6" fill="#bdbdbd" /><path d="M6 6l11 12" stroke="#eee" strokeWidth="3" strokeLinecap="round" /></>),
};

function Icon({ n, c = INK, s = 24 }: { n: string; c?: string; s?: number }) {
  return <svg width={s} height={s} viewBox="0 0 24 24" aria-hidden="true">{glyphs[n](c)}</svg>;
}

const shapes: Record<string, [number, number, string]> = {
  down: [12, 6, "M0 0h12L6 6z"],
  smallDown: [8, 4, "M0 0h8L4 4z"],
  smallUp: [8, 4, "M0 4h8L4 0z"],
  right: [7, 12, "M0 0l7 6-7 6z"],
  navLeft: [12, 16, "M12 0v16L0 8z"],
  navRight: [12, 16, "M0 0v16l12-8z"],
  navFirst: [16, 16, "M0 0h2v16H0zM16 0v16L4 8z"],
  navLast: [16, 16, "M14 0h2v16h-2zM0 0v16l12-8z"],
  collapse: [17, 16, "M0 0l8 8-8 8zM9 0l8 8-8 8z"],
};

function Shape({ n, c = "#777" }: { n: string; c?: string }) {
  const [w, h, d] = shapes[n];
  return <svg width={w} height={h} aria-hidden="true"><path d={d} fill={c} /></svg>;
}

const strokes: Record<string, [number, number, string, number]> = {
  plus: [17, 17, "M8.500 0v17M0 8.500h17", 3.4],
  thinPlus: [15, 15, "M7.500 0v15M0 7.500h15", 2],
  cross: [16, 16, "M1 1l14 14M15 1L1 15", 3],
  close: [16, 16, "M1 1l14 14M15 1L1 15", 1.3],
  minimize: [16, 16, "M0 8h16", 1.3],
  restore: [16, 16, "M1 4h10v11H1zM4 4V1h11v11h-4", 1.3],
  more: [14, 12, "M1 1l5 5-5 5M7 1l5 5-5 5", 1.8],
  chevLeft: [12, 14, "M10 0L3 7l7 7", 3],
  chevRight: [12, 14, "M2 0l7 7-7 7", 3],
  chevUp: [14, 10, "M1 9l6-6 6 6", 3.4],
  chevDown: [14, 10, "M1 1l6 6 6-6", 3.4],
  none: [18, 18, "M0 18L18 0", 1.2],
  noFill: [28, 28, "M0 28L28 0", 2],
};

function Stroke({ n, c = EDGE }: { n: string; c?: string }) {
  const [w, h, d, t] = strokes[n];
  return <svg width={w} height={h} aria-hidden="true"><path d={d} fill="none" stroke={c} strokeWidth={t} /></svg>;
}

function Grip({ w, h, space = 0 }: { w: number; h: number; space?: number }) {
  const dots: React.ReactNode[] = [];
  for (let y = 0; y < h; y += 3)
    for (let x = (y / 3) % 2 ? 3 : 0; x < w; x += 6)
      dots.push(<rect key={x + "-" + y} x={x} y={y} width="2" height="2" fill="#bbb" />);
  return <svg width={w + space} height={h} aria-hidden="true">{dots}</svg>;
}

/* ---------- data ---------- */

const menus = [["文件", "F"], ["编辑", "E"], ["查看", "V"], ["布局", "L"], ["对象", "J"], ["效果", "C"], ["位图", "B"], ["文本", "X"], ["表格", "T"], ["工具", "O"], ["窗口", "W"], ["帮助", "H"]];

type Plugin = { icon: string; text: string; latin?: string; w: number; c?: string; caret?: boolean };
const pluginGroups: Plugin[][] = [
  [{ icon: "mirror", text: "魔镜", w: 104 }],
  [
    { icon: "plane", text: "常用", w: 122, c: "#00a03c", caret: true },
    { icon: "plane", text: "特殊", w: 122, c: "#9900cc", caret: true },
    { icon: "plane", text: "超级", w: 122, c: "#0000ff", caret: true },
    { icon: "plane", text: "通用", w: 117, c: RED, caret: true },
  ],
  [
    { icon: "convert", text: "转曲", w: 109 },
    { icon: "smartGroup", text: "智能群组", w: 142 },
    { icon: "ps", text: "一键", latin: "PS", w: 127 },
    { icon: "picture", text: "导出图片", w: 142, c: "#111" },
    { icon: "cropMarks", text: "拼版角线", w: 142, c: "#000" },
    { icon: "gearBold", text: "插件设置", w: 142, c: "#000" },
    { icon: "ocr", text: "截图识字", w: 132 },
  ],
  [{ icon: "calendar", text: "农历", latin: "...", w: 98 }],
  [
    { icon: "capture", text: "截图", latin: "...", w: 100 },
    { icon: "macro", text: "超级巡边", w: 120 },
    { icon: "atom", text: "巡边", w: 122 },
    { icon: "anchor", text: "定位点", w: 142, c: "#000" },
    { icon: "engrave", text: "雕刻总管", w: 118 },
  ],
];

const tools = [
  ["pick", "shape"], ["crop", "zoom"], ["freehand", "brush", "rect", "ellipse", "polygon"],
  ["textTool"], ["dimension", "connector"], ["shadow", "transparency"], ["dropper", "fill"], ["contour"],
];
const plainTools = ["transparency", "contour"];

const cmyk = "231815 3e3737 595757 717071 888888 9e9f9f b4b5b5 c9caca dcdddd efefef ffffff 1d2088 00a0e9 009944 fff100 e60012 e4007f ae4084 f08300 f4b2b3 87756a d0cce5 a59aca 7189c5 796baf 9085ae 4f638e 59506e 7487a2 008cd7 9fd9f6 b5cad7 97a8b1 6f7d85 495058 557472 438a7b 729896 54a895 5aa572 5cc1d1 4ea8b6 b8cabd d5ead8 a4d4ad".split(" ");
const rgb = "000000 1a1a1a 333333 4d4d4d 666666 808080 999999 b3b3b3 cccccc e6e6e6 ffffff 0000ff 00ffff 00ff00 ffff00 ff0000 ff00ff 9900cc ff6600 ff99cc 663333 ccccff 9999ff 6699ff 6666ff 6666cc 003399 000066 336699 00ccff 99ffff 99cccc 669999 336666 003333 006633 009933 339966 33cc66 33cc33 66ffcc 33cc99 99cc99 ccffcc 99ff99".split(" ");

/* ---------- rulers ---------- */

const MM = 2.983;
const tickLength = (mm: number) => (mm % 20 === 0 ? 7 : mm % 10 === 0 ? 3 : 2);
const range = (from: number, to: number, step: number) =>
  Array.from({ length: Math.floor((to - from) / step) + 1 }, (_, i) => from + i * step);

function HorizontalRuler() {
  const x = (mm: number) => Math.round(653 + mm * MM);
  return (
    <RulerSvg>
      {range(-218, 436, 2).map((mm) => <rect key={mm} x={x(mm)} y={22 - tickLength(mm)} width="1" height={tickLength(mm)} fill="#8c8c8c" />)}
      {range(-200, 420, 20).map((mm) => <text key={mm} x={x(mm)} y="13" textAnchor="middle" fill="#8c8c8c">{Math.abs(mm)}</text>)}
      <text x="1926" y="14" fontSize="14" fill="#8c8c8c">毫米</text>
      <path d="M897.500 0V24" stroke="#999" strokeDasharray="3 3" />
    </RulerSvg>
  );
}

function VerticalRuler() {
  const y = (mm: number) => Math.round(997 - mm * MM);
  return (
    <RulerSvg>
      {range(-44, 332, 2).map((mm) => <rect key={mm} x={22 - tickLength(mm)} y={y(mm)} width={tickLength(mm)} height="1" fill="#8c8c8c" />)}
      {range(-20, 320, 20).map((mm) => <text key={mm} transform={`translate(13 ${y(mm)}) rotate(-90)`} textAnchor="middle" fill="#8c8c8c">{Math.abs(mm)}</text>)}
      <text transform="translate(14 1126) rotate(-90)" fontSize="14" fill="#8c8c8c">毫米</text>
      <path d="M0 345.500H24" stroke="#999" strokeDasharray="4 3" />
    </RulerSvg>
  );
}

/* ---------- sections ---------- */

function Tool({ n, off, tone, w }: { n: string; off?: boolean; tone?: "on" | "dark"; w?: number }) {
  return <ToolButton type="button" aria-label={n} $w={w} $tone={tone}><Icon n={n} c={off ? MUTE : INK} /></ToolButton>;
}

function SplitTool({ n, off }: { n: string; off?: boolean }) {
  return (
    <Split>
      <Tool n={n} off={off} />
      <CaretButton type="button" aria-label={n + " options"}><Shape n="down" c={off ? "#cfcfcf" : "#777"} /></CaretButton>
    </Split>
  );
}

function StandardToolbar() {
  return (
    <CommandBar $h={44}>
      <Tool n="newDoc" w={32} />
      <SplitTool n="folder" />
      <Tool n="save" off /><Tool n="cloudDown" tone="dark" /><Tool n="cloudUp" tone="dark" /><Tool n="print" off />
      <Divider />
      <Tool n="cut" off /><Tool n="copy" off /><Tool n="paste" />
      <Divider />
      <SplitTool n="undo" off /><SplitTool n="redo" off />
      <Divider />
      <Tool n="importIn" /><Tool n="exportOut" off /><Tool n="pdf" off />
      <Divider />
      <ComboBox $w={129}>
        <TextInput aria-label="缩放级别" defaultValue="79%" />
        <ComboCaret type="button" aria-label="缩放选项"><Shape n="down" /></ComboCaret>
      </ComboBox>
      <Tool n="fullscreen" />
      <Divider />
      <Tool n="rulers" tone="on" /><Tool n="gridEye" /><Tool n="guides" tone="on" />
      <Divider />
      <Tool n="snapOff" />
      <SnapButton type="button"><span>贴齐<Latin>(<u>T</u>)</Latin></span><Shape n="down" /></SnapButton>
      <Divider />
      <ToolButton type="button" aria-label="选项"><Icon n="gear" /><FlyoutCorner /></ToolButton>
      <Divider />
      <LaunchButton type="button"><Icon n="launch" />启动<Shape n="down" /></LaunchButton>
    </CommandBar>
  );
}

function Spin({ label, value }: { label: string; value: string }) {
  return (
    <SpinRow>
      <TextInput aria-label={label} defaultValue={value} />
      <SpinPair>
        <SpinButton type="button" aria-label={label + "减"}><Shape n="smallDown" /></SpinButton>
        <SpinButton type="button" aria-label={label + "加"}><Shape n="smallUp" /></SpinButton>
      </SpinPair>
    </SpinRow>
  );
}

function PropertyBar() {
  return (
    <Bar $h={64}>
      <PropertyGroup $w={248} $pad={0}>
        <SelectBox $w={239}>
          <NativeSelect aria-label="页面大小" $latin><option>A4</option></NativeSelect>
          <Shape n="down" />
        </SelectBox>
      </PropertyGroup>
      <PropertyGroup $w={184} $pad={8}>
        <SizeGrid>
          <Icon n="pageWidth" s={20} /><Spin label="宽度" value="210.0 mm" />
          <Icon n="pageHeight" s={20} /><Spin label="高度" value="297.0 mm" />
        </SizeGrid>
      </PropertyGroup>
      <PropertyGroup $w={48}>
        <ToolButton type="button" aria-label="自动调整页面"><Icon n="autofit" c={MUTE} /></ToolButton>
      </PropertyGroup>
      <PropertyGroup $w={97} $pad={11}><Tool n="portrait" tone="on" /><Tool n="landscape" /></PropertyGroup>
      <PropertyGroup $w={97} $pad={11}><Tool n="pagesAll" /><Tool n="pageOne" tone="on" /></PropertyGroup>
      <PropertyGroup $w={225} $pad={10} $gap={3}>
        <label htmlFor="units">单位：</label>
        <SelectBox $w={153}>
          <NativeSelect id="units"><option>毫米</option></NativeSelect>
          <Shape n="down" />
        </SelectBox>
      </PropertyGroup>
      <PropertyGroup $w={167} $pad={11} $gap={4}>
        <Icon n="nudge" />
        <ComboBox $w={120}>
          <TextInput aria-label="微调距离" defaultValue="0.1 mm" />
          <SpinStack>
            <SpinButton type="button" aria-label="增加"><Shape n="smallUp" /></SpinButton>
            <SpinButton type="button" aria-label="减少"><Shape n="smallDown" /></SpinButton>
          </SpinStack>
        </ComboBox>
      </PropertyGroup>
      <PropertyGroup $w={184} $pad={9}>
        <SizeGrid>
          <Icon n="dupX" s={20} /><Spin label="再制距离 X" value="5.0 mm" />
          <Icon n="dupY" s={20} /><Spin label="再制距离 Y" value="5.0 mm" />
        </SizeGrid>
      </PropertyGroup>
      <PropertyGroup $w={49}><Tool n="treatAll" tone="on" /></PropertyGroup>
      <PropertyGroup $w={97} $pad={11}><Tool n="editShape" off /><Tool n="doneShape" off /></PropertyGroup>
      <AddButton type="button" aria-label="自定义" $w={62} $h={34}><Stroke n="plus" /></AddButton>
    </Bar>
  );
}

function PluginToolbar() {
  return (
    <PluginBar $h={44}>
      <PluginButton type="button" aria-label="macro" $w={41}><Icon n="macro" /></PluginButton>
      <PluginGrip />
      {pluginGroups.map((group, i) => (
        <React.Fragment key={i}>
          {i > 0 && <PluginDivider />}
          {group.map((p) => (
            <PluginButton key={p.text} type="button" $w={p.w}>
              <Icon n={p.icon} c={p.c} />
              <span>{p.text}{p.latin && <Latin>{p.latin}</Latin>}</span>
              {p.caret && <PluginCaret><Shape n="down" /></PluginCaret>}
            </PluginButton>
          ))}
        </React.Fragment>
      ))}
      <Overflow type="button" aria-label="更多"><Stroke n="more" /></Overflow>
    </PluginBar>
  );
}

function FindDocker() {
  return (
    <Docker>
      <DockerHeader>
        <span>查找并替换</span>
        <button type="button" aria-label="折叠"><Shape n="collapse" c={EDGE} /></button>
        <button type="button" aria-label="关闭"><Stroke n="cross" /></button>
      </DockerHeader>
      <DockerMain>
        <DockerBody>
          <FormRow>
            <SelectBox><NativeSelect aria-label="查找类型"><option>查找对象</option></NativeSelect><Shape n="down" /></SelectBox>
          </FormRow>
          <FormRow>
            <SelectBox><NativeSelect aria-label="预设"><option>自定义</option></NativeSelect><Shape n="down" /></SelectBox>
            <FormIcons>
              <button type="button" aria-label="打开"><Icon n="folder" /></button>
              <button type="button" aria-label="保存"><Icon n="save" c={MUTE} /></button>
            </FormIcons>
          </FormRow>
          <Radios>
            <RadioLabel><Radio type="radio" name="find-by" defaultChecked />属性</RadioLabel>
            <RadioLabel><Radio type="radio" name="find-by" />名称或样式</RadioLabel>
          </Radios>
          <Rule $top={27} />
          <QuerySection>
            <Heading>搜索查询</Heading>
            <QueryList>
              <QueryItem><Icon n="props" c="#666" />未定义</QueryItem>
              <QueryItem><Icon n="fill" />未定义</QueryItem>
              <QueryItem><Icon n="pen" />未定义</QueryItem>
              <QueryItem><Icon n="fx" c="#666" />未定义</QueryItem>
            </QueryList>
          </QuerySection>
          <Rule $top={47} />
          <ButtonGrid $top={29} $cols="219px 1fr">
            <PushButton type="button" $wide>添加查询<Latin>...</Latin></PushButton>
            <PushButton type="button" disabled>从选定内容</PushButton>
            <PushButton type="button" disabled>重置</PushButton>
          </ButtonGrid>
          <Rule $top={21} $thick />
          <ScopeHeading><Heading><Shape n="down" />搜索范围</Heading></ScopeHeading>
          <Rule $top={30} />
          <ButtonGrid $top={23} $cols="1fr 1fr">
            <PushButton type="button" disabled $small>&lt;</PushButton>
            <PushButton type="button" disabled $small>&gt;</PushButton>
            <PushButton type="button" disabled $wide>查找全部</PushButton>
          </ButtonGrid>
        </DockerBody>
        <DockerTabs>
          <DockerTab type="button"><Icon n="binoculars" /><TabLabel>查找并替换</TabLabel></DockerTab>
          <AddButton type="button" aria-label="添加泊坞窗" $w={30} $h={34}><Stroke n="plus" /></AddButton>
        </DockerTabs>
      </DockerMain>
    </Docker>
  );
}

function ColorPalette({ colors, off }: { colors: string[]; off?: boolean }) {
  return (
    <Palette>
      <PaletteTop>
        <Grip w={23} h={9} />
        <Shape n="right" />
        <Icon n="dropper" s={20} c={off ? MUTE : INK} />
        <Stroke n="chevUp" c="#cfcfcf" />
      </PaletteTop>
      <Swatches>
        <Swatch type="button" aria-label="无" $c="#fff"><Stroke n="none" c={RED} /></Swatch>
        {colors.map((c, i) => <Swatch key={i} type="button" aria-label={"#" + c} $c={"#" + c} />)}
      </Swatches>
      <PaletteBottom><Stroke n="chevDown" /><Stroke n="more" /></PaletteBottom>
    </Palette>
  );
}

function Status() {
  return (
    <StatusBar>
      <ToolButton type="button" aria-label="状态栏选项"><Icon n="gear" /><FlyoutCorner /></ToolButton>
      <StatusText>
        接着单击可进行拖动或缩放；再单击可旋转或倾斜；双击工具，可选择所有对象；按住 <Latin>Shift</Latin> 键单击可选择多个对象；按住 <Latin>Alt</Latin> 键单击可进行挖掘
      </StatusText>
      <FillInfo>
        <Icon n="fill" />
        <ColorChip $c="#fff"><Stroke n="noFill" c="#d00000" /></ColorChip>
        <span>无</span>
      </FillInfo>
      <OutlineInfo>
        <Icon n="pen" />
        <ColorChip $c="#231815" />
        <InkList>
          {[["C:", "0"], ["M:", "0"], ["Y:", "0"], ["K:", "100"]].map(([k, v]) => (
            <InkPair key={k}><span>{k}</span><span>{v}</span></InkPair>
          ))}
        </InkList>
      </OutlineInfo>
      <Divider />
      <ToolButton type="button" aria-label="颜色校样"><Icon n="colorDoc" /></ToolButton>
      <Watermark>
        <svg width="36" height="34" viewBox="0 0 36 34" aria-hidden="true">
          <path d="M2 3Q10 4 11 14Q18 19 25 14Q26 4 34 3Q29 8 30 18Q30 26 34 32H27Q23 27 25 20Q18 23 11 20Q13 27 9 32H2Q6 26 6 18Q7 8 2 3zM15 22h2v9h-2zM19 22h2v9h-2z" fill="#e4605c" stroke="#fff" strokeWidth="1" />
        </svg>
        <WatermarkText>華印社區<WatermarkUrl>www.52cnp.com</WatermarkUrl></WatermarkText>
      </Watermark>
    </StatusBar>
  );
}

export default function App() {
  return (
    <Shell>
      <GlobalStyle />
      <TitleBar>
        <Icon n="logo" />
        <span><Latin>CorelDRAW - </Latin>未命名<Latin> -1</Latin></span>
        <WindowControls>
          <AccountButton type="button" aria-label="账户"><Icon n="user" c={MUTE} /></AccountButton>
          {["minimize", "restore", "close"].map((n) => (
            <AddButton key={n} type="button" aria-label={n} $w={24} $h={24}><Stroke n={n} c="#888" /></AddButton>
          ))}
        </WindowControls>
      </TitleBar>
      <MenuBar>
        {menus.map(([text, key]) => (
          <button key={key} type="button">{text}<Latin>(<u>{key}</u>)</Latin></button>
        ))}
      </MenuBar>
      <StandardToolbar />
      <PropertyBar />
      <Main>
        <Toolbox>
          {tools.map((group, i) => (
            <React.Fragment key={i}>
              {i > 0 && <ToolRule />}
              {group.map((n) => (
                <ToolButton key={n} type="button" aria-label={n} $w={32} $tone={n === "pick" ? "on" : undefined}>
                  <Icon n={n} c={n === "contour" ? "#000" : INK} />
                  {!plainTools.includes(n) && <FlyoutCorner />}
                </ToolButton>
              ))}
            </React.Fragment>
          ))}
          <ToolRule />
          <AddButton type="button" aria-label="自定义工具" $w={32} $h={46}><Stroke n="plus" /></AddButton>
        </Toolbox>
        <Center>
          <PluginToolbar />
          <Work>
            <DocumentArea>
              <DocTabs>
                <TabCell type="button" aria-label="欢迎屏幕" $w={30}><Icon n="home" /></TabCell>
                <TabCell type="button" $w={141} $active><span>未命名<Latin> -1</Latin></span></TabCell>
                <TabCell type="button" aria-label="新建文档" $w={31}><Stroke n="plus" /></TabCell>
              </DocTabs>
              <HRulerRow>
                <RulerCorner><svg width="25" height="24"><g transform="translate(5 5)">{glyphs.origin(INK)}</g></svg></RulerCorner>
                <HorizontalRuler />
              </HRulerRow>
              <CanvasRow>
                <VRuler><VerticalRuler /></VRuler>
                <CanvasColumn>
                  <Canvas><Page /></Canvas>
                  <VScroll><Grow $n={260} /><VThumb /><Grow $n={262} /></VScroll>
                  <HScroll><HThumb /></HScroll>
                  <ZoomCorner type="button" aria-label="导航器"><Icon n="zoomPage" s={20} /></ZoomCorner>
                </CanvasColumn>
              </CanvasRow>
              <PageBar>
                <PageNav>
                  <button type="button" aria-label="在前面添加页"><Stroke n="thinPlus" c={INK} /></button>
                  <button type="button" aria-label="第一页"><Shape n="navFirst" c="#b4b4b4" /></button>
                  <button type="button" aria-label="上一页"><Shape n="navLeft" c="#b4b4b4" /></button>
                  <PageCount><Latin>1</Latin><span>的</span><Latin>1</Latin></PageCount>
                  <button type="button" aria-label="下一页"><Shape n="navRight" c="#b4b4b4" /></button>
                  <button type="button" aria-label="最后一页"><Shape n="navLast" c="#b4b4b4" /></button>
                  <button type="button" aria-label="在后面添加页"><Stroke n="thinPlus" c={INK} /></button>
                </PageNav>
                <PageTab type="button">页<Latin> 1</Latin></PageTab>
              </PageBar>
              <ColorBar>
                <Grip w={9} h={24} space={3} />
                <Shape n="right" />
                <span />
                <Icon n="dropper" s={20} />
                <Stroke n="chevLeft" c="#cfcfcf" />
                <NoneSwatch type="button" aria-label="无"><Stroke n="none" c={RED} /></NoneSwatch>
                <Hint>将颜色(或对象)拖动至此处，以便将这些颜色与文档存储在一起</Hint>
                <Stroke n="chevRight" c="#cfcfcf" />
                <Stroke n="more" />
              </ColorBar>
            </DocumentArea>
            <Splitter />
            <FindDocker />
          </Work>
        </Center>
        <ColorPalette colors={cmyk} off />
        <ColorPalette colors={rgb} />
      </Main>
      <Status />
    </Shell>
  );
}
